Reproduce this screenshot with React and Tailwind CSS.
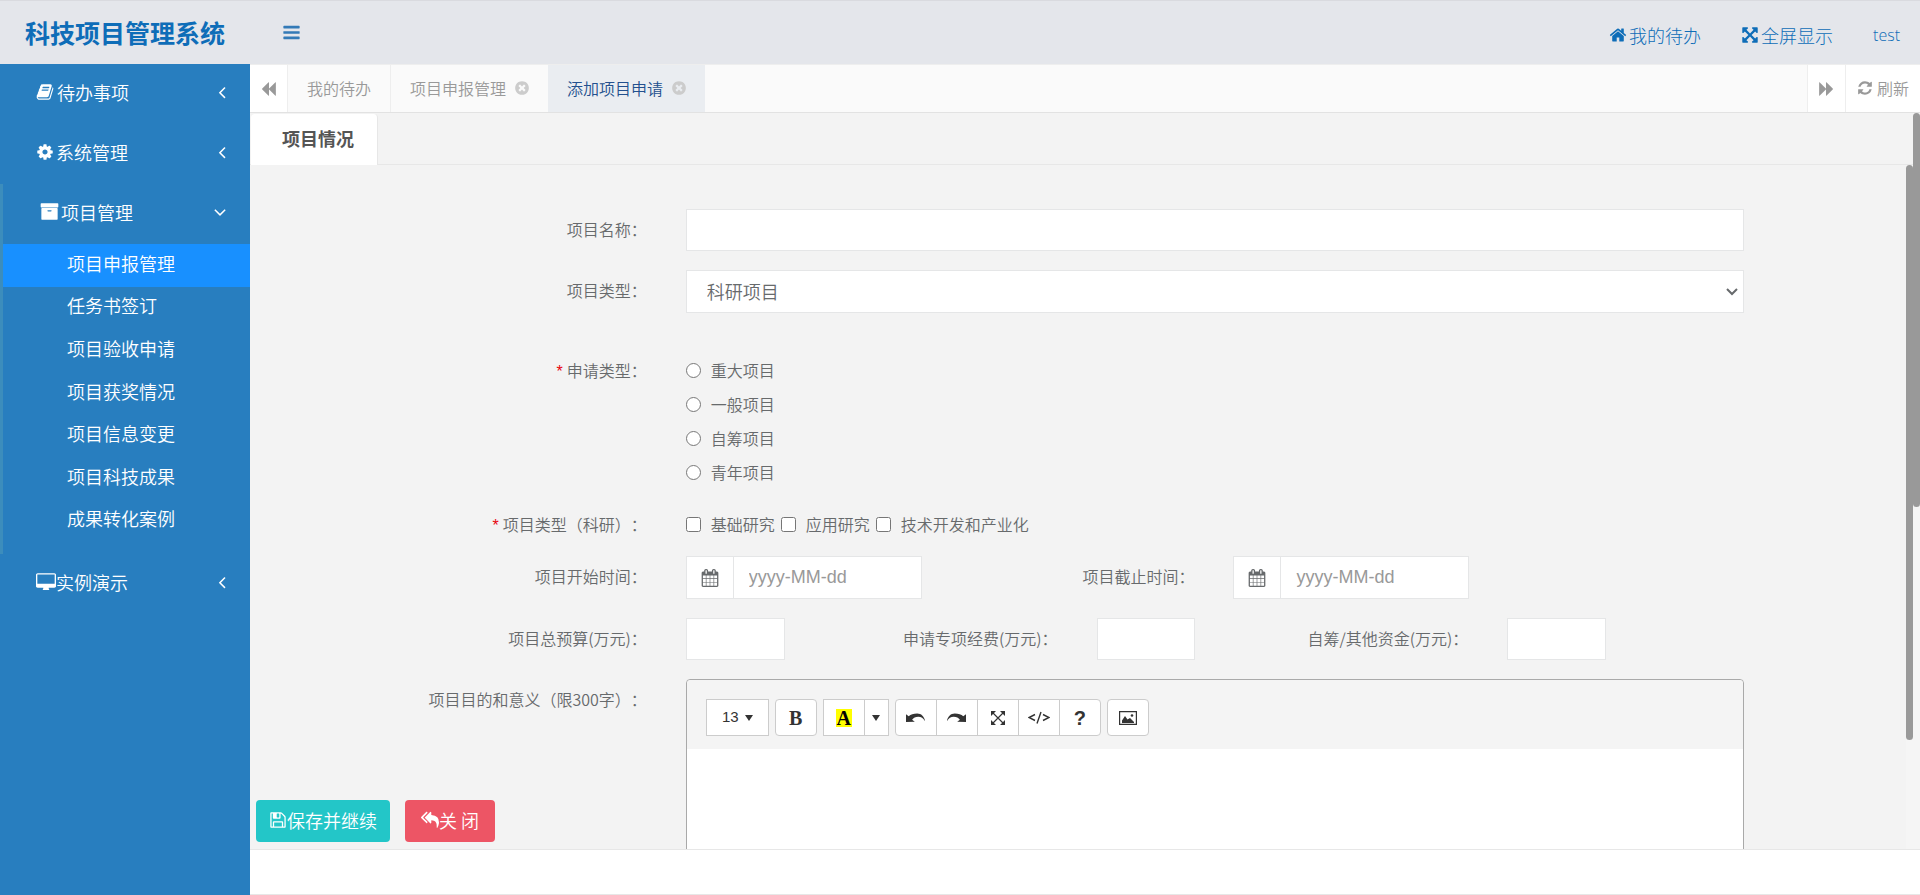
import { useState } from 'react';

// Font Awesome 4 outlines, drawn on a 1792 grid
const PATHS = {
  bars: 'M1664 1344v128q0 26-19 45t-45 19h-1408q-26 0-45-19t-19-45v-128q0-26 19-45t45-19h1408q26 0 45 19t19 45zm0-512v128q0 26-19 45t-45 19h-1408q-26 0-45-19t-19-45v-128q0-26 19-45t45-19h1408q26 0 45 19t19 45zm0-512v128q0 26-19 45t-45 19h-1408q-26 0-45-19t-19-45v-128q0-26 19-45t45-19h1408q26 0 45 19t19 45z',
  book: 'M1703 478q40 57 18 129l-275 906q-19 64-76.5 107.5t-122.5 43.5h-923q-77 0-148.5-53.5t-99.5-131.5q-24-67-2-127 0-4 3-27t4-37q1-8-3-21.5t-3-19.5q2-11 8-21t16.5-23.5 16.5-23.5q23-38 45-91.5t30-91.5q3-10 .5-30t-.5-28q3-11 17-28t17-23q21-36 42-92t25-90q1-9-2.5-32t.5-28q4-13 22-30.5t22-22.5q19-26 42.5-84.5t27.5-96.5q1-8-3-25.5t-2-26.5q2-8 9-18t18-23 17-21q8-12 16.5-30.5t15-35 16-36 19.5-32 26.5-23.5 36-11.5 47.5 5.5l-1 3q38-9 51-9h761q74 0 114 56t18 130l-274 906q-36 119-71.5 153.5t-128.5 34.5h-869q-27 0-38 15-11 16-1 43 24 70 144 70h923q29 0 56-15.5t35-41.5l300-987q7-22 5-57 38 15 59 43zm-1064 2q-4 13 2 22.5t20 9.5h608q13 0 25.5-9.5t16.5-22.5l21-64q4-13-2-22.5t-20-9.5h-608q-13 0-25.5 9.5t-16.5 22.5zm-83 256q-4 13 2 22.5t20 9.5h608q13 0 25.5-9.5t16.5-22.5l21-64q4-13-2-22.5t-20-9.5h-608q-13 0-25.5 9.5t-16.5 22.5z',
  cog: 'M1152 896q0-106-75-181t-181-75-181 75-75 181 75 181 181 75 181-75 75-181zm512-109v222q0 12-8 23t-20 13l-185 28q-19 54-39 91 35 50 107 138 10 12 10 25t-9 23q-27 37-99 108t-94 71q-12 0-26-9l-138-108q-44 23-91 38-16 136-29 186-7 28-36 28h-222q-14 0-24.5-8.5t-11.5-21.5l-28-184q-49-16-90-37l-141 107q-10 9-25 9-14 0-25-11-126-114-165-168-7-10-7-23 0-12 8-23 15-21 51-66.5t54-70.5q-27-50-41-99l-183-27q-13-2-21-12.5t-8-23.5v-222q0-12 8-23t19-13l186-28q14-46 39-92-40-57-107-138-10-12-10-24 0-10 9-23 26-36 98.5-107.5t94.5-71.5q13 0 26 10l138 107q44-23 91-38 16-136 29-186 7-28 36-28h222q14 0 24.5 8.5t11.5 21.5l28 184q49 16 90 37l142-107q9-9 24-9 13 0 25 10 129 119 165 170 7 8 7 22 0 12-8 23-15 21-51 66.5t-54 70.5q26 50 41 98l183 28q13 2 21 12.5t8 23.5z',
  archive: 'M1088 832q0-26-19-45t-45-19h-256q-26 0-45 19t-19 45 19 45 45 19h256q26 0 45-19t19-45zm576-192v960q0 26-19 45t-45 19h-1408q-26 0-45-19t-19-45v-960q0-26 19-45t45-19h1408q26 0 45 19t19 45zm64-448v256q0 26-19 45t-45 19h-1536q-26 0-45-19t-19-45v-256q0-26 19-45t45-19h1536q26 0 45 19t19 45z',
  desktop: 'M1728 992v-832q0-13-9.5-22.5t-22.5-9.5h-1600q-13 0-22.5 9.5t-9.5 22.5v832q0 13 9.5 22.5t22.5 9.5h1600q13 0 22.5-9.5t9.5-22.5zm128-832v1088q0 66-47 113t-113 47h-544q0 37 16 77.5t32 71 16 43.5q0 26-19 45t-45 19h-512q-26 0-45-19t-19-45q0-14 16-44t32-70 16-78h-544q-66 0-113-47t-47-113v-1088q0-66 47-113t113-47h1600q66 0 113 47t47 113z',
  home: 'M1472 992v480q0 26-19 45t-45 19h-384v-384h-256v384h-384q-26 0-45-19t-19-45v-480q0-1 .5-3t.5-3l575-474 575 474q1 2 1 6zm223-69l-62 74q-8 9-21 11h-3q-13 0-21-7l-692-577-692 577q-12 8-24 7-13-2-21-11l-62-74q-8-10-7-23.5t11-21.5l719-599q32-26 76-26t76 26l244 204v-195q0-14 9-23t23-9h192q14 0 23 9t9 23v408l219 182q10 8 11 21.5t-7 23.5z',
  arrows: 'M1411 541l-355 355 355 355 144-144q29-31 70-14 39 17 39 59v448q0 26-19 45t-45 19h-448q-42 0-59-40-17-39 14-69l144-144-355-355-355 355 144 144q31 30 14 69-17 40-59 40h-448q-26 0-45-19t-19-45v-448q0-42 40-59 39-17 69 14l144 144 355-355-355-355-144 144q-19 19-45 19-12 0-24-5-40-17-40-59v-448q0-26 19-45t45-19h448q42 0 59 40 17 39-14 69l-144 144 355 355 355-355-144-144q-31-30-14-69 17-40 59-40h448q26 0 45 19t19 45v448q0 42-39 59-13 5-25 5-26 0-45-19z',
  refresh: 'M1639 1056q0 5-1 7-64 268-268 434.5t-478 166.5q-146 0-282.5-55t-243.5-157l-129 129q-19 19-45 19t-45-19-19-45v-448q0-26 19-45t45-19h448q26 0 45 19t19 45-19 45l-137 137q71 66 161 102t187 36q134 0 250-65t186-179q11-17 53-117 8-23 30-23h192q13 0 22.5 9.5t9.5 22.5zm25-800v448q0 26-19 45t-45 19h-448q-26 0-45-19t-19-45 19-45l138-138q-148-137-349-137-134 0-250 65t-186 179q-11 17-53 117-8 23-30 23h-199q-13 0-22.5-9.5t-9.5-22.5v-7q65-268 270-434.5t480-166.5q146 0 284 55.5t245 156.5l130-129q19-19 45-19t45 19 19 45z',
  calendar: 'M192 1664h288v-288h-288v288zm352 0h320v-288h-320v288zm-352-352h288v-320h-288v320zm352 0h320v-320h-320v320zm-352-384h288v-288h-288v288zm736 736h320v-288h-320v288zm-384-736h320v-288h-320v288zm768 736h288v-288h-288v288zm-384-352h320v-320h-320v320zm-352-864v-288q0-13-9.5-22.5t-22.5-9.5h-64q-13 0-22.5 9.5t-9.5 22.5v288q0 13 9.5 22.5t22.5 9.5h64q13 0 22.5-9.5t9.5-22.5zm736 864h288v-320h-288v320zm-384-384h320v-288h-320v288zm384 0h288v-288h-288v288zm32-480v-288q0-13-9.5-22.5t-22.5-9.5h-64q-13 0-22.5 9.5t-9.5 22.5v288q0 13 9.5 22.5t22.5 9.5h64q13 0 22.5-9.5t9.5-22.5zm384-64v1280q0 52-38 90t-90 38h-1408q-52 0-90-38t-38-90v-1280q0-52 38-90t90-38h128v-96q0-66 47-113t113-47h64q66 0 113 47t47 113v96h384v-96q0-66 47-113t113-47h64q66 0 113 47t47 113v96h128q52 0 90 38t38 90z',
  save: 'M512 1536h768v-384h-768v384zm896 0h128v-896q0-14-10-38.5t-20-34.5l-281-281q-10-10-34-20t-39-10v416q0 40-28 68t-68 28h-576q-40 0-68-28t-28-68v-416h-128v1280h128v-416q0-40 28-68t68-28h832q40 0 68 28t28 68v416zm-384-928v-320q0-13-9.5-22.5t-22.5-9.5h-192q-13 0-22.5 9.5t-9.5 22.5v320q0 13 9.5 22.5t22.5 9.5h192q13 0 22.5-9.5t9.5-22.5zm640 32v928q0 40-28 68t-68 28h-1344q-40 0-68-28t-28-68v-1344q0-40 28-68t68-28h928q40 0 88 20t76 48l280 280q28 28 48 76t20 88z',
  replyAll: 'M640 1082v70q0 42-39 59-13 5-25 5-27 0-45-19l-512-512q-19-19-19-45t19-45l512-512q29-31 70-14 39 17 39 59v69l-397 398q-19 19-19 45t19 45zm1152 58q0 58-17 133.5t-38.5 138-48 125-40.5 90.5l-20 40q-8 17-28 17-6 0-9-1-25-8-23-34 43-400-106-565-64-71-170.5-110.5t-267.5-52.5v251q0 42-39 59-13 5-25 5-27 0-45-19l-512-512q-19-19-19-45t19-45l512-512q29-31 70-14 39 17 39 59v262q411 28 599 221 169 173 169 509z',
  timesCircle: 'M1277 1122q0-26-19-45l-181-181 181-181q19-19 19-45 0-27-19-46l-90-90q-19-19-46-19-26 0-45 19l-181 181-181-181q-19-19-45-19-27 0-46 19l-90 90q-19 19-19 46 0 26 19 45l181 181-181 181q-19 19-19 45 0 27 19 46l90 90q19 19 46 19 26 0 45-19l181-181 181 181q19 19 45 19 27 0 46-19l90-90q19-19 19-46zm387-226q0 209-103 385.5t-279.5 279.5-385.5 103-385.5-103-279.5-279.5-103-385.5 103-385.5 279.5-279.5 385.5-103 385.5 103 279.5 279.5 103 385.5z',
  backward: 'M1619 141q19-19 32-13t13 32v1472q0 26-13 32t-32-13l-710-710q-9-9-13-19v710q0 26-13 32t-32-13l-710-710q-19-19-19-45t19-45l710-710q19-19 32-13t13 32v710q4-10 13-19z',
  angleLeft: 'M1203 544q0 13-10 23l-393 393 393 393q10 10 10 23t-10 23l-50 50q-10 10-23 10t-23-10l-466-466q-10-10-10-23t10-23l466-466q10-10 23-10t23 10l50 50q10 10 10 23z',
  angleDown: 'M1395 736q0 13-10 23l-466 466q-10 10-23 10t-23-10l-466-466q-10-10-10-23t10-23l50-50q10-10 23-10t23 10l393 393 393-393q10-10 23-10t23 10l50 50q10 10 10 23z',
};

const Icon = ({ name, viewBox = '0 0 1792 1792', className = 'size-[18px]' }) => (
  <svg viewBox={viewBox} fill="currentColor" aria-hidden="true" className={`shrink-0 ${className}`}>
    <path d={PATHS[name]} />
  </svg>
);

const SUB_ITEMS = ['项目申报管理', '任务书签订', '项目验收申请', '项目获奖情况', '项目信息变更', '项目科技成果', '成果转化案例'];
const APPLY_TYPES = ['重大项目', '一般项目', '自筹项目', '青年项目'];
const RESEARCH_TYPES = ['基础研究', '应用研究', '技术开发和产业化'];

const MenuItem = ({ label, open, onClick, className = 'pl-9', children }) => (
  <button type="button" onClick={onClick} className={`flex h-[60px] w-full items-center pb-[5px] text-lg ${open ? 'pr-5' : 'pr-[18px]'} ${className}`}>
    {children}
    <span>{label}</span>
    <Icon name={open ? 'angleDown' : 'angleLeft'} className="ml-auto size-5" />
  </button>
);

const Sidebar = () => {
  const [open, setOpen] = useState(true);
  const [active, setActive] = useState(SUB_ITEMS[0]);

  return (
    <nav className="w-[250px] shrink-0 bg-[#287ebf] text-white">
      <MenuItem label="待办事项">
        <Icon name="book" className="mr-[3px] size-[18px]" />
      </MenuItem>
      <MenuItem label="系统管理">
        <Icon name="cog" className="mr-[2px] size-[18px]" />
      </MenuItem>
      <div className="border-l-[3px] border-[#3c8dbc] pb-3">
        <MenuItem label="项目管理" open={open} onClick={() => setOpen(!open)} className="pl-[37px]">
          <Icon name="archive" className="mr-[2px] size-[19px]" />
        </MenuItem>
        {open && (
          <ul className="flex h-[298px] flex-col">
            {SUB_ITEMS.map((item) => (
              <li key={item} className="flex-1">
                <a
                  href="#"
                  onClick={() => setActive(item)}
                  className={`flex h-full items-center pb-[5px] pl-16 text-lg ${item === active ? 'bg-[#1890ff]' : ''}`}
                >
                  {item}
                </a>
              </li>
            ))}
          </ul>
        )}
      </div>
      <MenuItem label="实例演示">
        <Icon name="desktop" viewBox="-64 0 1920 1600" className="h-[17px] w-5" />
      </MenuItem>
    </nav>
  );
};

const PageTabs = () => (
  <div className="flex h-12 shrink-0 border-b border-[#e2e2e2] bg-[#fafafa] text-base text-[#999]">
    <button type="button" aria-label="向左" className="flex w-[38px] items-center justify-center border-r border-[#eee] bg-white">
      <Icon name="backward" className="size-4" />
    </button>
    <a href="#" className="flex items-center border-r border-[#eee] px-[19px] pb-[2px]">我的待办</a>
    <a href="#" className="flex items-center gap-2 pr-[18px] pb-[2px] pl-[19px]">
      项目申报管理
      <Icon name="timesCircle" className="size-4 text-[#ccc]" />
    </a>
    <a href="#" className="flex items-center gap-2 bg-[#eaedf1] pr-[18px] pb-[2px] pl-[19px] text-[#23508e]">
      添加项目申请
      <Icon name="timesCircle" className="size-4 text-[#ccc]" />
    </a>
    <button type="button" aria-label="向右" className="ml-auto flex w-[38px] items-center justify-center border-l border-[#eee] bg-white">
      <Icon name="backward" className="size-4 rotate-180" />
    </button>
    <button type="button" className="flex items-center gap-1 border-l border-[#eee] bg-white px-[11px] pb-[2px]">
      <Icon name="refresh" className="size-4" />
      刷新
    </button>
  </div>
);

const Label = ({ htmlFor, required, className = 'col-span-3', children }) => (
  <label htmlFor={htmlFor} className={`pt-2 pr-[21px] text-right leading-6 whitespace-nowrap ${className}`}>
    {required && <span className="mr-1 font-[Liberation_Sans] text-red-600">*</span>}
    {children}
  </label>
);

const DateInput = ({ id }) => (
  <div className="col-span-2 pr-5 pl-[18px]">
    <div className="flex h-[43px] border border-[#e5e6e7] bg-white">
      <span className="flex w-[47px] shrink-0 items-center justify-center border-r border-[#e5e6e7]">
        <Icon name="calendar" />
      </span>
      <input id={id} type="text" placeholder="yyyy-MM-dd" className="w-full min-w-0 px-[15px] pb-[2px] font-[Liberation_Sans] text-lg placeholder:text-[#999]" />
    </div>
  </div>
);

const MoneyInput = ({ id }) => (
  <div className="col-span-1 pr-5 pl-[18px]">
    <input id={id} type="text" className="block h-[42px] w-full border border-[#e5e6e7] bg-white px-3" />
  </div>
);

const ToolButton = ({ label, className = 'w-[42px] rounded', children }) => (
  <button type="button" aria-label={label} className={`flex h-[37px] items-center justify-center border border-[#ccc] bg-white font-[Liberation_Sans] text-[#333] ${className}`}>
    {children}
  </button>
);

const Caret = () => (
  <svg viewBox="0 0 8 6" fill="currentColor" className="h-[6px] w-2"><path d="M0 0h8L4 6z" /></svg>
);

const UndoIcon = ({ className = '' }) => (
  <svg viewBox="0 0 56 28" fill="currentColor" className={`h-[10px] w-[19px] ${className}`}>
    <path d="M0 3v23l26-1-8-6c4-6 10-9 18-9 9 0 15 4 19 12h1C53 9 45 1 33 1 22 1 14 4 8 9z" />
  </svg>
);

const Editor = () => (
  <div className="min-h-[360px] rounded border border-[#a9a9a9] bg-white">
    <div className="flex gap-[6px] rounded-t bg-[#f4f4f4] px-[19px] pt-[19px] pb-[13px]">
      <ToolButton className="w-[63px] gap-[6px] text-[15px]">13<Caret /></ToolButton>
      <ToolButton>
        <span className="font-[Liberation_Serif] text-xl font-bold">B</span>
      </ToolButton>
      <div className="flex">
        <ToolButton className="w-[42px]">
          <span className="bg-[#ffff00] px-px font-[Liberation_Serif] text-xl leading-[18px] font-bold text-black">A</span>
        </ToolButton>
        <ToolButton label="更多颜色" className="-ml-px w-[25px]"><Caret /></ToolButton>
      </div>
      <div className="flex">
        <ToolButton label="撤销" className="w-[42px] rounded-l"><UndoIcon /></ToolButton>
        <ToolButton label="重做" className="-ml-px w-[42px]"><UndoIcon className="-scale-x-100" /></ToolButton>
        <ToolButton label="全屏" className="-ml-px w-[42px]">
          <svg viewBox="0 0 14 14" className="size-[14px]" fill="currentColor" stroke="currentColor">
            <path d="M2 2l10 10M12 2L2 12" strokeWidth="1.200" />
            <path stroke="none" d="M0 0h5L0 5zM14 0v5L9 0zM0 14V9l5 5zM14 14H9l5-5z" />
          </svg>
        </ToolButton>
        <ToolButton label="源代码" className="-ml-px w-[42px]">
          <svg viewBox="0 0 22 13" className="h-[13px] w-[22px]" fill="none" stroke="currentColor" strokeWidth="1.400">
            <path d="M7 3.500L1 6.500 7 9.500M15 3.500l6 3L15 9.500M13 1L9 12.500" />
          </svg>
        </ToolButton>
        <ToolButton className="-ml-px w-[42px] rounded-r text-xl font-bold">?</ToolButton>
      </div>
      <ToolButton label="图片">
        <svg viewBox="0 0 18 14" className="h-[14px] w-[18px]" fill="currentColor">
          <path d="M0 0h18v14H0zM1.200 1.200v11.600h15.600V1.200z" fillRule="evenodd" />
          <path d="M3 12V9.500L6 5l2.500 3.500L11 7l4 4v1z" />
          <circle cx="13" cy="4.500" r="1.300" />
        </svg>
      </ToolButton>
    </div>
    <div contentEditable suppressContentEditableWarning role="textbox" aria-labelledby="purposeLabel" className="min-h-[280px] p-3 outline-none" />
  </div>
);

const ProjectForm = () => (
  <form className="grid grid-cols-12 pt-11 pr-5 pl-[7px] text-base text-[#676a6c] [text-spacing-trim:space-all]">
    <Label htmlFor="name">项目名称：</Label>
    <div className="col-span-8 pr-[19px] pl-[18px]">
      <input id="name" type="text" className="block h-[42px] w-full border border-[#e5e6e7] bg-white px-4" />
    </div>

    <Label htmlFor="type" className="col-span-3 col-start-1 mt-[19px]">项目类型：</Label>
    <div className="relative col-span-8 mt-[19px] pr-[19px] pl-[18px]">
      <select id="type" className="block h-[43px] w-full appearance-none border border-[#e5e6e7] bg-white px-5 pb-[2px] text-lg">
        <option>科研项目</option>
      </select>
      <svg viewBox="0 0 12 8" fill="none" stroke="currentColor" strokeWidth="2" className="pointer-events-none absolute top-[18px] right-[25px] h-2 w-3">
        <path d="M1 1l5 5 5-5" />
      </svg>
    </div>

    <Label required className="col-span-3 col-start-1 mt-[37px]">申请类型：</Label>
    <div role="radiogroup" className="col-span-8 mt-10 px-[18px]">
      {APPLY_TYPES.map((type) => (
        <label key={type} className="flex h-[34px] items-center gap-[10px]">
          <input type="radio" name="applyType" value={type} className="size-[15px]" />
          {type}
        </label>
      ))}
    </div>

    <Label required className="col-span-3 col-start-1 mt-[15px]">项目类型（科研）：</Label>
    <div className="col-span-8 mt-[15px] flex h-10 items-center gap-[6px] px-[18px]">
      {RESEARCH_TYPES.map((type) => (
        <label key={type} className="flex items-center gap-[10px]">
          <input type="checkbox" value={type} className="size-[15px]" />
          {type}
        </label>
      ))}
    </div>

    <div className="col-span-12 mt-3 grid grid-cols-12">
      <Label htmlFor="startDate">项目开始时间：</Label>
      <DateInput id="startDate" />
      <Label htmlFor="endDate" className="col-span-2">项目截止时间：</Label>
      <DateInput id="endDate" />
    </div>

    <div className="col-span-12 mt-[19px] grid grid-cols-12">
      <Label htmlFor="total">项目总预算(万元)：</Label>
      <MoneyInput id="total" />
      <Label htmlFor="special" className="col-span-2">申请专项经费(万元)：</Label>
      <MoneyInput id="special" />
      <Label htmlFor="other" className="col-span-2">自筹/其他资金(万元)：</Label>
      <MoneyInput id="other" />
    </div>

    <div className="col-span-12 mt-[19px] grid grid-cols-12">
      <span id="purposeLabel" className="col-span-3 pt-2 pr-[21px] text-right leading-6">项目目的和意义（限300字）：</span>
      <div className="col-span-8 pr-[19px] pl-[18px]">
        <Editor />
      </div>
    </div>
  </form>
);

const App = () => {
  return (
    <div className="flex h-screen flex-col overflow-hidden font-['Noto_Sans_CJK_SC','Liberation_Sans',sans-serif] font-[350]">
      <header className="flex h-16 shrink-0 items-center border-t border-[#d9dadf] bg-[#e4e6eb] text-[#0e6db8]">
        <h1 className="w-[250px] shrink-0 pl-[25px] text-[25px] font-bold">科技项目管理系统</h1>
        <button type="button" aria-label="菜单" className="ml-8 text-[#337ab7]">
          <Icon name="bars" className="size-[19px]" />
        </button>
        <div className="ml-auto flex items-center gap-10 pt-1 pr-5 text-lg font-light">
          <a href="#" className="flex items-center gap-[2px]"><Icon name="home" />我的待办</a>
          <a href="#" className="flex items-center gap-[2px]"><Icon name="arrows" />全屏显示</a>
          <a href="#" className="font-['Open_Sans'] text-base">test</a>
        </div>
      </header>

      <div className="flex min-h-0 flex-1">
        <Sidebar />
        <main className="flex min-w-0 flex-1 flex-col border-t border-[#eee]">
          <PageTabs />
          <div className="relative flex min-h-0 flex-1 flex-col bg-[#f3f3f3]">
            <div className="flex h-[52px] shrink-0 items-end border-b border-[#e7e7e7]">
              <button type="button" className="-mb-px ml-px h-[51px] rounded-t border-r border-[#e7e7e7] bg-white pr-[23px] pb-1 pl-[31px] text-lg font-bold text-[#555]">
                项目情况
              </button>
            </div>
            <div className="min-h-0 flex-1 overflow-hidden">
              <ProjectForm />
            </div>

            {/* Scroll bars: the page's and the form's */}
            <div className="absolute inset-y-0 right-0 w-[7px] bg-[#f5f5f5]">
              <div className="h-[394px] rounded-full bg-[#999]" />
            </div>
            <div className="absolute top-[52px] right-[7px] bottom-0 w-[7px] bg-[#f5f5f5]">
              <div className="h-[575px] rounded-full bg-[#999]" />
            </div>

            <div className="absolute bottom-[7px] left-[6px] flex gap-[15px] text-lg text-white">
              <button type="button" className="flex h-[42px] items-center rounded bg-[#23c6c8] px-[13px] pb-[3px]">
                <Icon name="save" />保存并继续
              </button>
              <button type="button" className="flex h-[42px] items-center rounded bg-[#ed5565] px-4 pb-[3px]">
                <Icon name="replyAll" />关 闭
              </button>
            </div>
          </div>
          <footer className="h-[46px] shrink-0 border-y border-[#e7e7e7] bg-white" />
        </main>
      </div>
    </div>
  );
};

export default App;
